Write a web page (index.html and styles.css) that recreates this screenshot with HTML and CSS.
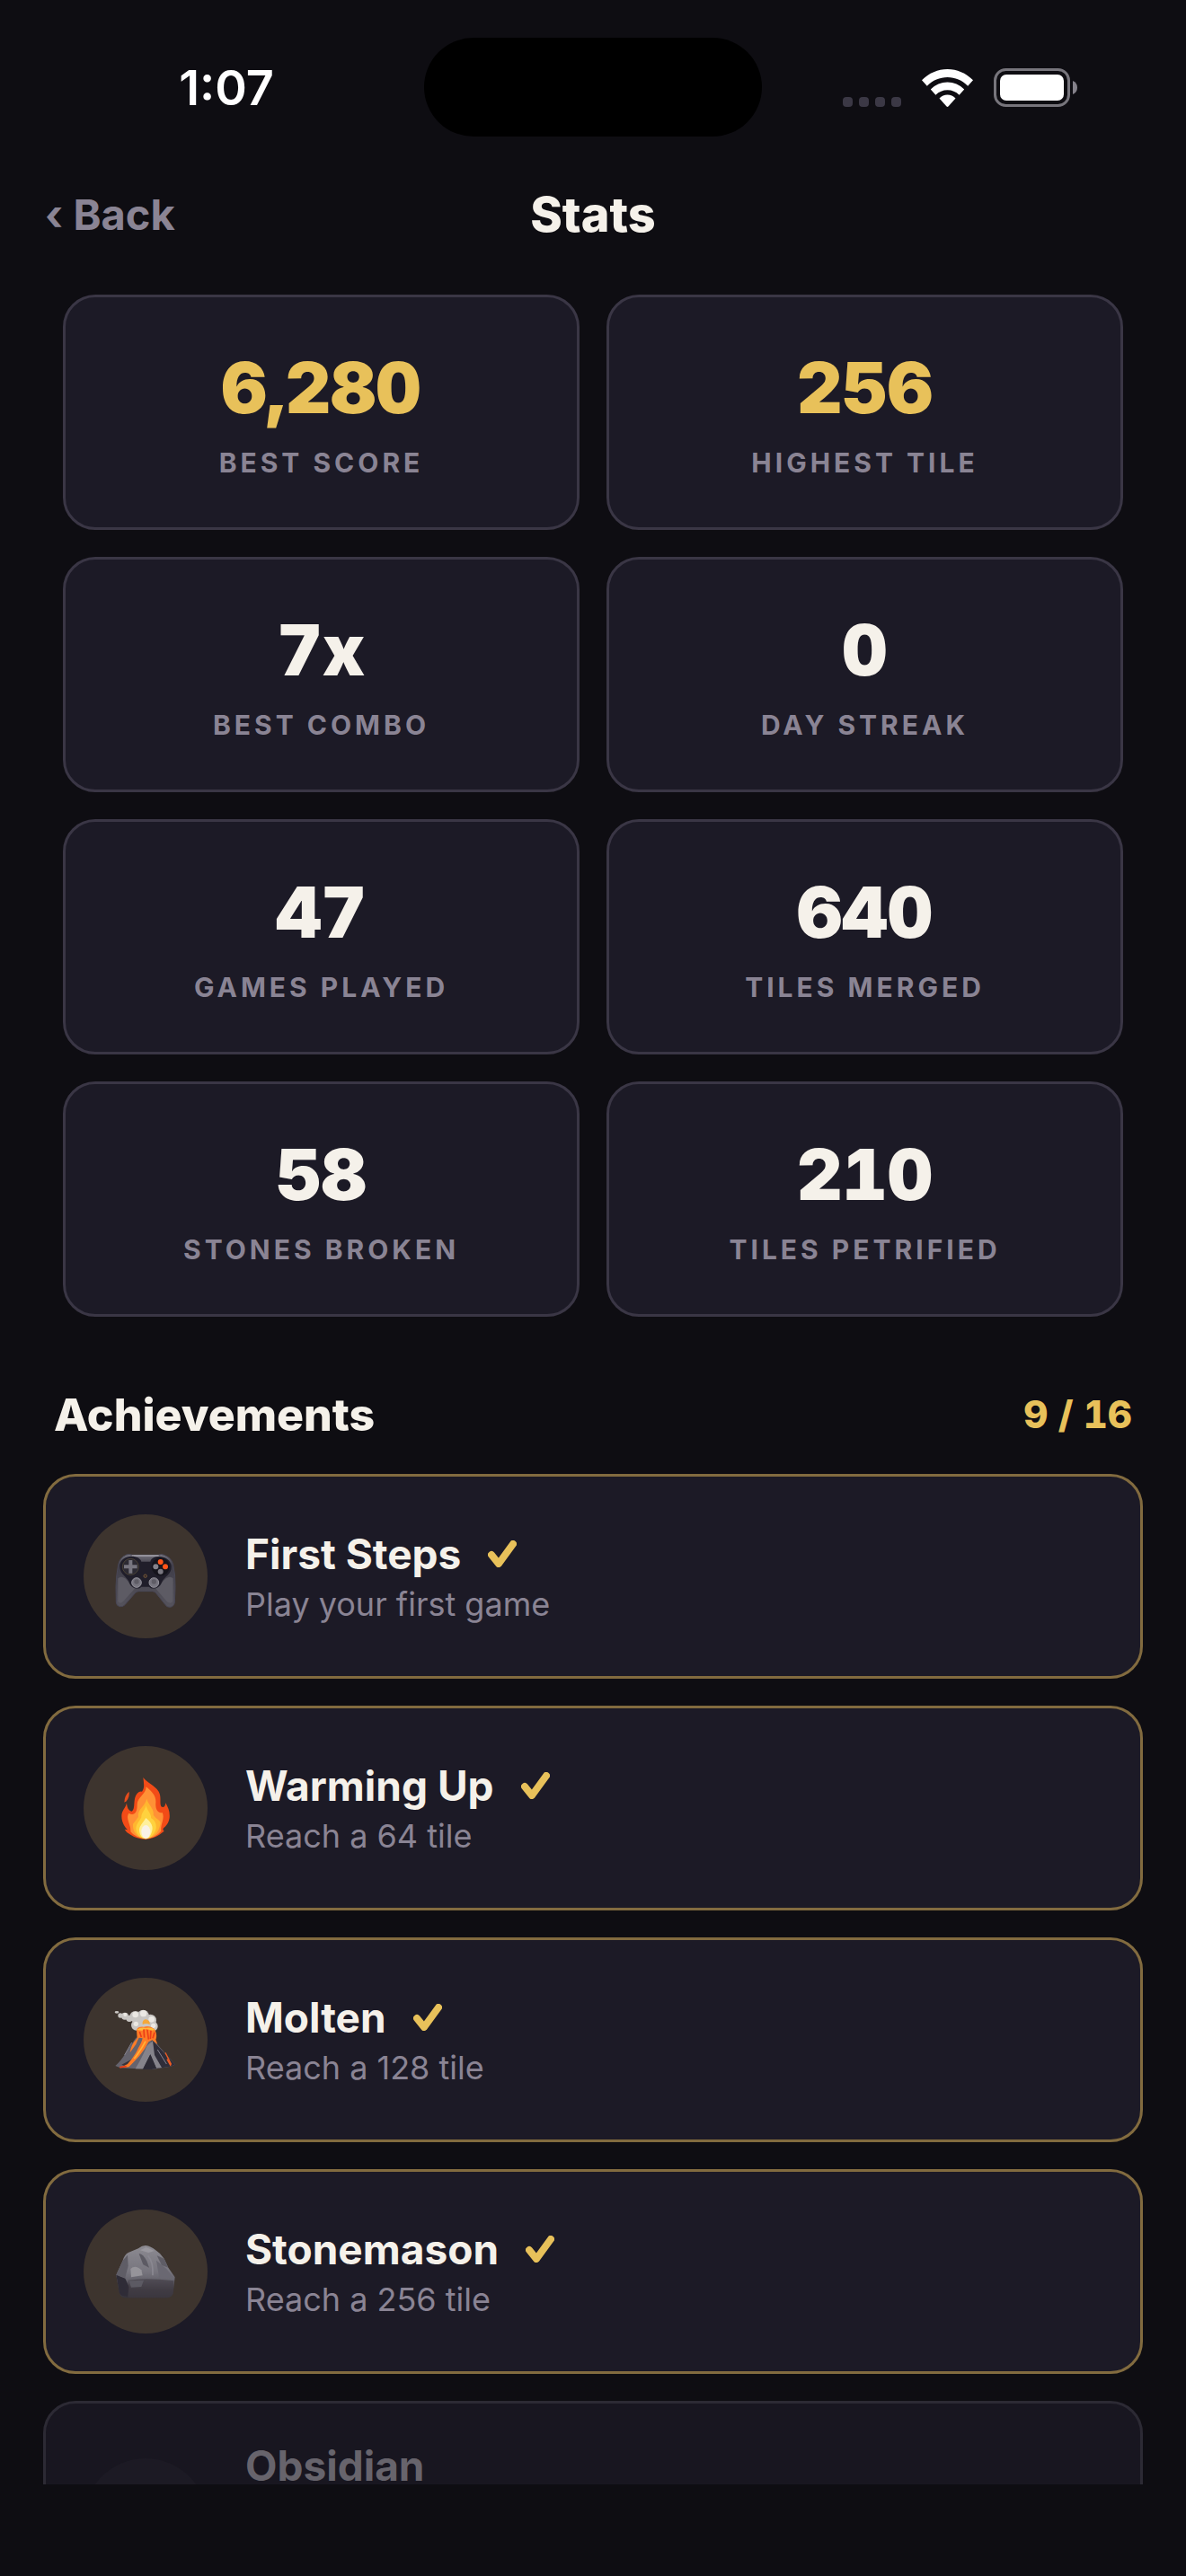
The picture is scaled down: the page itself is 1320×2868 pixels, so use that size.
FILE: index.html
```html
<!DOCTYPE html>
<html lang="en">
<head>
    <meta charset="UTF-8">
    <meta name="viewport" content="width=device-width, initial-scale=1.0">
    <title>Stats</title>
    <link rel="stylesheet" href="styles.css">
</head>
<body>
    <!-- Status bar -->
    <div class="status-bar">
        <div class="status-time">1:07</div>
        <div class="island"></div>
        <div class="status-icons">
            <div class="signal"><span></span><span></span><span></span><span></span></div>
            <svg width="57" height="42" viewBox="0 0 57 42" fill="#ffffff">
                <path d="M28.500 0C39 0 49 4.300 57 12.200L51.200 18.700C45 12.400 37 9 28.500 9C20 9 12 12.400 5.800 18.700L0 12.200C8 4.300 18 0 28.500 0Z"/>
                <path d="M28.500 14.500C35.500 14.500 42 17.400 47.200 22.500L41.600 28.700C38 25.300 33.500 23.300 28.500 23.300C23.500 23.300 19 25.300 15.400 28.700L9.800 22.500C15 17.400 21.500 14.500 28.500 14.500Z"/>
                <path d="M28.500 28.600C32 28.600 35 30 37.500 32.500L29.700 41.300Q28.500 42.500 27.300 41.300L19.500 32.500C22 30 25 28.600 28.500 28.600Z"/>
            </svg>
            <svg width="93" height="43" viewBox="0 0 93 43">
                <rect x="1.500" y="1.500" width="82" height="40" rx="12" fill="none" stroke="#77757c" stroke-width="3"/>
                <rect x="7" y="7" width="71" height="29" rx="7" fill="#ffffff"/>
                <path d="M88 14Q93 16 93 21.500Q93 27 88 29Z" fill="#85828b"/>
            </svg>
        </div>
    </div>

    <!-- Header -->
    <header class="header">
        <button class="back" type="button">‹ Back</button>
        <h1>Stats</h1>
    </header>

    <main class="content">
        <!-- Stat tiles -->
        <section class="stats">
            <div class="stat">
                <div class="stat-value gold">6,280</div>
                <div class="stat-label">Best Score</div>
            </div>
            <div class="stat">
                <div class="stat-value gold">256</div>
                <div class="stat-label">Highest Tile</div>
            </div>
            <div class="stat">
                <div class="stat-value">7x</div>
                <div class="stat-label">Best Combo</div>
            </div>
            <div class="stat">
                <div class="stat-value">0</div>
                <div class="stat-label">Day Streak</div>
            </div>
            <div class="stat">
                <div class="stat-value">47</div>
                <div class="stat-label">Games Played</div>
            </div>
            <div class="stat">
                <div class="stat-value">640</div>
                <div class="stat-label">Tiles Merged</div>
            </div>
            <div class="stat">
                <div class="stat-value">58</div>
                <div class="stat-label">Stones Broken</div>
            </div>
            <div class="stat">
                <div class="stat-value">210</div>
                <div class="stat-label">Tiles Petrified</div>
            </div>
        </section>

        <!-- Achievements -->
        <div class="section-head">
            <h2>Achievements</h2>
            <span class="count">9 / 16</span>
        </div>

        <section class="achievements">
            <div class="achievement">
                <div class="badge">
                    <!-- game controller -->
                    <svg viewBox="138 147 216 216">
                        <defs>
                            <linearGradient id="padBody" x1="0" y1="0" x2="0" y2="1">
                                <stop offset="0" stop-color="#77757f"/>
                                <stop offset="0.200" stop-color="#3f3d48"/>
                                <stop offset="1" stop-color="#55535c"/>
                            </linearGradient>
                        </defs>
                        <path d="M182 183Q192 179 202 184H288Q298 179 308 184Q332 192 338 216Q346 250 345 292L343 342Q341 357 327 358Q317 358 312 350L280 310Q276 305 268 305H224Q217 305 212 310L177 350Q170 358 160 356Q149 354 148 342L147 290Q148 250 155 216Q160 192 182 183Z" fill="url(#padBody)" stroke="#484655" stroke-width="3"/>
                        <path d="M154 262Q164 252 178 262L210 296L172 338Q160 350 154 338Z" fill="#5d5b64"/>
                        <path d="M338 262Q328 252 314 262L280 296L316 338Q330 350 337 338Z" fill="#5d5b64"/>
                        <path d="M200 186H290" stroke="#a19ea6" stroke-width="5"/>
                        <path d="M160 222C160 180 226 180 232 206H262C266 180 330 182 332 222C334 250 306 256 300 276C292 298 266 300 258 290H232C224 300 202 298 192 278C188 258 160 250 160 222Z" fill="#201e2a"/>
                        <circle cx="196" cy="223" r="27" fill="#2c2a33" stroke="#5b5039" stroke-width="2"/>
                        <path d="M190 201H202V217H218V229H202V245H190V229H174V217H190Z" fill="#77757f"/>
                        <circle cx="296" cy="223" r="30" fill="#15141c"/>
                        <circle cx="296" cy="207" r="9" fill="#ff5418"/>
                        <circle cx="312" cy="223" r="9" fill="#ff5418"/>
                        <circle cx="280" cy="223" r="9" fill="#85838c"/>
                        <circle cx="296" cy="239" r="9" fill="#7a7881"/>
                        <circle cx="245" cy="254" r="5" fill="#252029" stroke="#806039" stroke-width="3"/>
                        <circle cx="216" cy="276" r="16" fill="#77757f" stroke="#94929b" stroke-width="3"/>
                        <circle cx="274" cy="276" r="16" fill="#77757f" stroke="#94929b" stroke-width="3"/>
                        <circle cx="216" cy="273" r="8" fill="#5f5d66"/>
                        <circle cx="274" cy="273" r="8" fill="#5f5d66"/>
                    </svg>
                </div>
                <div class="achievement-body">
                    <div class="achievement-title">First Steps
                        <svg class="check" viewBox="0 0 32 30"><path d="M4 16L12 26L28 4"/></svg>
                    </div>
                    <div class="achievement-text">Play your first game</div>
                </div>
            </div>

            <div class="achievement">
                <div class="badge">
                    <!-- fire -->
                    <svg viewBox="138 141 216 216">
                        <path d="M238 147C250 164 276 172 290 194C300 212 292 230 298 244C306 250 312 244 313 232C322 248 328 262 326 282C324 296 318 306 306 316Q302 322 308 326Q300 332 292 338Q270 352 245 353Q216 352 196 338Q182 332 176 320L186 322Q166 302 166 276C166 258 180 248 183 232C184 246 188 258 200 260C214 252 202 218 218 200Q226 192 234 194C244 182 240 164 238 147Z" fill="#f24b17"/>
                        <path d="M191 194Q194 210 182 226L175 230Q176 206 191 194Z" fill="#e64c1c"/>
                        <path d="M248 178C270 196 282 210 280 232C278 256 290 268 302 264C312 284 294 306 298 326Q278 350 246 351Q212 349 196 328C198 304 178 286 190 266C206 276 218 266 218 240C216 214 248 204 248 178Z" fill="#ff9136"/>
                        <path d="M250 218C256 240 276 252 272 272C282 286 290 286 296 296C294 326 276 348 246 351C216 348 202 326 204 302C210 294 214 290 222 278C218 252 244 244 250 218Z" fill="#ffb62f"/>
                        <path d="M248 240C252 260 266 268 264 282C280 292 284 306 280 322C272 342 260 351 246 352C228 350 216 338 214 318C214 302 226 294 232 280C232 264 244 256 248 240Z" fill="#ffd23e"/>
                        <path d="M247 282C262 294 272 306 268 324C264 342 256 352 246 352C234 350 226 340 225 322C226 306 240 296 247 282Z" fill="#fff09b"/>
                        <ellipse cx="247" cy="328" rx="15" ry="22" fill="#f9f2e6"/>
                    </svg>
                </div>
                <div class="achievement-body">
                    <div class="achievement-title">Warming Up
                        <svg class="check" viewBox="0 0 32 30"><path d="M4 16L12 26L28 4"/></svg>
                    </div>
                    <div class="achievement-text">Reach a 64 tile</div>
                </div>
            </div>

            <div class="achievement">
                <div class="badge">
                    <!-- volcano -->
                    <svg viewBox="138 141 216 216">
                        <g fill="#c9c6c3">
                            <ellipse cx="150" cy="157" rx="7" ry="4"/>
                            <circle cx="162" cy="168" r="8"/>
                            <circle cx="177" cy="170" r="12"/>
                            <circle cx="192" cy="178" r="11"/>
                            <circle cx="212" cy="172" r="19"/>
                            <circle cx="238" cy="168" r="19"/>
                            <circle cx="262" cy="184" r="20"/>
                            <circle cx="270" cy="204" r="17"/>
                            <circle cx="216" cy="200" r="18"/>
                            <circle cx="240" cy="192" r="20"/>
                        </g>
                        <g fill="#ebe8e3">
                            <circle cx="178" cy="165" r="6"/>
                            <circle cx="212" cy="165" r="10"/>
                            <circle cx="239" cy="161" r="11"/>
                            <circle cx="266" cy="181" r="10"/>
                            <circle cx="214" cy="196" r="8"/>
                            <circle cx="272" cy="202" r="8"/>
                        </g>
                        <path d="M236 190Q240 178 252 182Q262 188 260 198Q248 192 236 198Z" fill="#f4a83a"/>
                        <path d="M145 336Q166 318 184 286L214 242L236 236L270 246Q300 282 345 332L330 338L268 348L162 343Z" fill="#65636d"/>
                        <path d="M268 250Q300 284 345 332L328 338L266 348H236Q240 302 268 250Z" fill="#2f2d39"/>
                        <path d="M270 252L276 300L300 342L282 344L262 298L238 346H212Q236 306 250 270Z" fill="#85838b"/>
                        <path d="M262 298L282 344L238 346Z" fill="#2c2a35"/>
                        <path d="M166 332L204 312L182 338Z" fill="#38333a"/>
                        <path d="M216 216Q220 204 240 206Q262 200 278 216Q286 236 280 248L286 264L268 250L256 256Q244 282 226 302Q204 326 190 340L160 343L186 330Q210 304 222 276Q234 256 236 244L224 242Q218 252 214 264Q204 278 194 292Q198 264 218 244Z" fill="#ff7c26"/>
                        <path d="M216 216Q232 206 246 210Q264 206 278 216L264 218L250 212L234 218Z" fill="#ffbc3c"/>
                        <path d="M226 222L232 240M240 214L242 242M252 216L256 248M264 218L262 246M276 224L270 244M160 341L182 338" stroke="#ec3e18" stroke-width="5" fill="none"/>
                        <path d="M246 254Q232 282 208 312" stroke="#ffb437" stroke-width="5" fill="none"/>
                        <path d="M312 292L332 332M318 314L330 336" stroke="#ed5b23" stroke-width="4"/>
                        <path d="M200 258L176 300M286 282L316 330" stroke="#858390" stroke-width="3"/>
                    </svg>
                </div>
                <div class="achievement-body">
                    <div class="achievement-title">Molten
                        <svg class="check" viewBox="0 0 32 30"><path d="M4 16L12 26L28 4"/></svg>
                    </div>
                    <div class="achievement-text">Reach a 128 tile</div>
                </div>
            </div>

            <div class="achievement">
                <div class="badge">
                    <!-- rock -->
                    <svg viewBox="138 141 216 216">
                        <defs>
                            <linearGradient id="rockTop" x1="0" y1="0" x2="0" y2="1">
                                <stop offset="0" stop-color="#8c8a91"/>
                                <stop offset="0.500" stop-color="#77757e"/>
                                <stop offset="0.650" stop-color="#67656e"/>
                                <stop offset="0.850" stop-color="#423e46"/>
                                <stop offset="1" stop-color="#35323a"/>
                            </linearGradient>
                        </defs>
                        <path d="M148 260L170 212Q176 192 188 186L222 172Q234 162 246 162Q264 164 280 178Q296 188 308 206L322 236L344 268L338 322Q334 336 318 337H176Q160 334 158 318Z" fill="url(#rockTop)"/>
                        <path d="M148 260L170 212L186 194L188 230L178 270Z" fill="#5f5d66"/>
                        <path d="M148 260L178 272L192 302L186 332Q160 332 158 318Z" fill="#2f2c37"/>
                        <path d="M188 278Q250 268 340 280L338 322Q334 336 318 337H188Z" fill="#3f3b43" opacity="0.600"/>
                        <path d="M224 190Q236 188 250 214L258 236L238 226Z" fill="#5c5a63"/>
                        <path d="M284 196L308 206L322 236L300 228Z" fill="#5f5d66"/>
                        <path d="M282 212L316 240L338 268L292 272Z" fill="#6a6872"/>
                        <path d="M196 240Q212 224 232 244L236 262L198 268Z" fill="#96949a"/>
                        <path d="M228 178L248 168L276 180L256 186Z" fill="#99979e"/>
                        <path d="M254 196Q272 216 270 262" stroke="#8a8891" stroke-width="5" fill="none"/>
                        <path d="M190 280L240 278L232 300L198 302Z" fill="#5c5a63"/>
                    </svg>
                </div>
                <div class="achievement-body">
                    <div class="achievement-title">Stonemason
                        <svg class="check" viewBox="0 0 32 30"><path d="M4 16L12 26L28 4"/></svg>
                    </div>
                    <div class="achievement-text">Reach a 256 tile</div>
                </div>
            </div>

            <div class="achievement locked">
                <div class="badge"></div>
                <div class="achievement-body">
                    <div class="achievement-title">Obsidian</div>
                </div>
            </div>
        </section>
    </main>
</body>
</html>
```

FILE: styles.css
```css
/* Universal styling */
* {
    box-sizing: border-box;
    margin: 0;
    padding: 0;
}

body {
    background-color: #0e0d12;
    color: #f5f1ea;
    font-family: Inter, "Liberation Sans", sans-serif;
    display: flex;
    flex-direction: column;
    height: 100vh;
    padding-bottom: 102px;
}

svg {
    display: block;
}

/* Status bar */
.status-bar {
    display: grid;
    grid-template-columns: 1fr 376px 1fr;
    align-items: center;
    justify-items: center;
    padding: 42px 32px 0;
}

.status-time {
    font-size: 54px;
    font-weight: 600;
    color: #ffffff;
}

.island {
    width: 100%;
    height: 110px;
    border-radius: 55px;
    background-color: #000000;
}

.status-icons {
    display: flex;
    align-items: flex-end;
    gap: 23px;
}

.signal {
    display: flex;
    gap: 7px;
}

.signal span {
    width: 11px;
    height: 11px;
    border-radius: 4px;
    background-color: #3b3845;
}

/* Header */
.header {
    display: grid;
    grid-template-columns: 1fr auto 1fr;
    align-items: center;
    padding: 51px 50px 17px;
    line-height: 72px;
}

.header h1 {
    font-size: 54px;
    font-weight: 800;
}

.back {
    justify-self: start;
    border: none;
    background: none;
    font: inherit;
    font-size: 47px;
    font-weight: 700;
    color: #8a8494;
    cursor: pointer;
}

/* Scrolling area */
.content {
    flex: 1;
    min-height: 0;
    overflow-y: auto;
    scrollbar-width: none;
    padding: 36px 48px 0;
}

/* Stat tiles */
.stats {
    display: grid;
    grid-template-columns: 1fr 1fr;
    gap: 30px;
    padding: 0 22px;
}

.stat {
    padding: 54px 24px;
    border: 3px solid #3a3645;
    border-radius: 36px;
    background-color: #1c1a26;
    text-align: center;
}

.stat-value {
    font-size: 78px;
    line-height: 94px;
    font-weight: 900;
    font-variant-numeric: tabular-nums;
    margin-bottom: 18px;
}

.stat-label {
    font-size: 30px;
    line-height: 36px;
    font-weight: 700;
    letter-spacing: 4px;
    text-transform: uppercase;
    color: #8a8494;
}

.gold {
    color: #e8c15a;
}

/* Achievements heading */
.section-head {
    display: flex;
    justify-content: space-between;
    align-items: center;
    padding: 78px 12px 35px;
    line-height: 62px;
}

.section-head h2 {
    font-size: 50px;
    font-weight: 800;
}

.count {
    font-size: 42px;
    font-weight: 800;
    font-variant-numeric: tabular-nums;
    color: #e8c15a;
}

/* Achievement cards */
.achievements {
    display: flex;
    flex-direction: column;
    gap: 30px;
}

.achievement {
    display: flex;
    align-items: center;
    gap: 42px;
    padding: 42px;
    border: 3px solid #826b3f;
    border-radius: 36px;
    background-color: #1c1a26;
}

.badge {
    display: flex;
    align-items: center;
    justify-content: center;
    flex-shrink: 0;
    width: 138px;
    height: 138px;
    border-radius: 50%;
    background-color: #3d342e;
}

.badge svg {
    width: 72px;
    height: 72px;
}

.achievement-title {
    display: flex;
    align-items: center;
    gap: 30px;
    font-size: 46px;
    line-height: 54px;
    font-weight: 700;
    margin-bottom: 8px;
}

.check {
    width: 32px;
    height: 30px;
    fill: none;
    stroke: #e8c15a;
    stroke-width: 8;
    stroke-linecap: round;
    stroke-linejoin: round;
}

.achievement-text {
    font-size: 36px;
    line-height: 42px;
    color: #8a8494;
}

/* Locked achievement */
.locked {
    border-color: #2c2a34;
    background-color: #181620;
}

.locked .achievement-body {
    min-height: 176px;
}

.locked .badge {
    background-color: #1c1a24;
}

.locked .achievement-title {
    color: #67646c;
}
```
